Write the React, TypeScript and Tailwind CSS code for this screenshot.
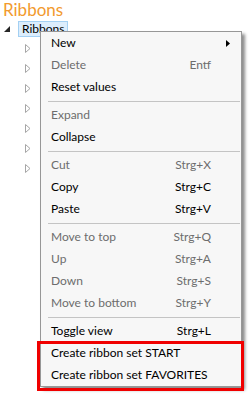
import React from "react";

type Item =
  | { sep: true }
  | { label: string; shortcut?: string; disabled?: boolean; submenu?: boolean; sep?: false };

const menuItems: Item[] = [
  { label: "New", submenu: true },
  { label: "Delete", shortcut: "Entf", disabled: true },
  { label: "Reset values" },
  { sep: true },
  { label: "Expand", disabled: true },
  { label: "Collapse" },
  { sep: true },
  { label: "Cut", shortcut: "Strg+X", disabled: true },
  { label: "Copy", shortcut: "Strg+C" },
  { label: "Paste", shortcut: "Strg+V" },
  { sep: true },
  { label: "Move to top", shortcut: "Strg+Q", disabled: true },
  { label: "Up", shortcut: "Strg+A", disabled: true },
  { label: "Down", shortcut: "Strg+S", disabled: true },
  { label: "Move to bottom", shortcut: "Strg+Y", disabled: true },
  { sep: true },
  { label: "Toggle view", shortcut: "Strg+L" },
  { label: "Create ribbon set START" },
  { label: "Create ribbon set FAVORITES" },
];

const ExpandedArrow = () => (
  <svg width="6" height="6" viewBox="0 0 6 6">
    <polygon points="6,0 6,6 0,6" fill="#262626" />
  </svg>
);

const CollapsedArrow = () => (
  <svg width="6" height="9" viewBox="0 0 6 9">
    <path d="M0.5 0.5 L5 4.5 L0.5 8.5 Z" fill="none" stroke="#a6a6a6" strokeWidth="1" />
  </svg>
);

const App = () => {
  return (
    <div className="relative w-[252px] h-[404px] bg-white overflow-hidden font-['Lato',sans-serif] text-[12px]">
      {/* Header */}
      <div className="pl-[3px] h-[19px] leading-[19px] text-[17px] text-[#f29a2e]">Ribbons</div>

      {/* Tree */}
      <div className="flex flex-col">
        <div className="flex items-center h-[19px]">
          <div className="w-[18px] flex justify-end pr-[8px]">
            <ExpandedArrow />
          </div>
          <div className="h-[16px] px-[3px] flex items-center border border-[#a3d0f3] bg-[#dcedfc] text-black">
            Ribbons
          </div>
        </div>
        {Array.from({ length: 7 }).map((_, i) => (
          <div key={i} className="flex items-center h-[20px] pl-[25px]">
            <CollapsedArrow />
          </div>
        ))}
      </div>

      {/* Context menu */}
      <div className="absolute left-[40px] top-[31px] w-[202px] border border-[#979797] bg-[#f7f7f7] shadow-[3px_3px_3px_rgba(0,0,0,0.45)]">
        {menuItems.map((item, i) =>
          item.sep ? (
            <div key={i} className="h-px mt-[3px] mb-[2px] ml-[7px] mr-px bg-[#c4c4c4]" />
          ) : (
            <div
              key={i}
              className={`relative flex items-center h-[22px] pl-[10px] pr-[30px] ${
                item.disabled ? "text-[#6d6d6d]" : "text-black"
              }`}
            >
              <span className="flex-1 whitespace-nowrap">{item.label}</span>
              {item.shortcut && <span className="whitespace-nowrap">{item.shortcut}</span>}
              {item.submenu && (
                <svg className="absolute right-[11px] top-[8px]" width="4" height="7" viewBox="0 0 4 7">
                  <polygon points="0,0 4,3.5 0,7" fill="#000" />
                </svg>
              )}
            </div>
          )
        )}
      </div>

      {/* Highlight */}
      <div className="absolute left-[37px] top-[341px] w-[207px] h-[50px] border-[3px] border-[#f00000]" />
    </div>
  );
};

export default App;
